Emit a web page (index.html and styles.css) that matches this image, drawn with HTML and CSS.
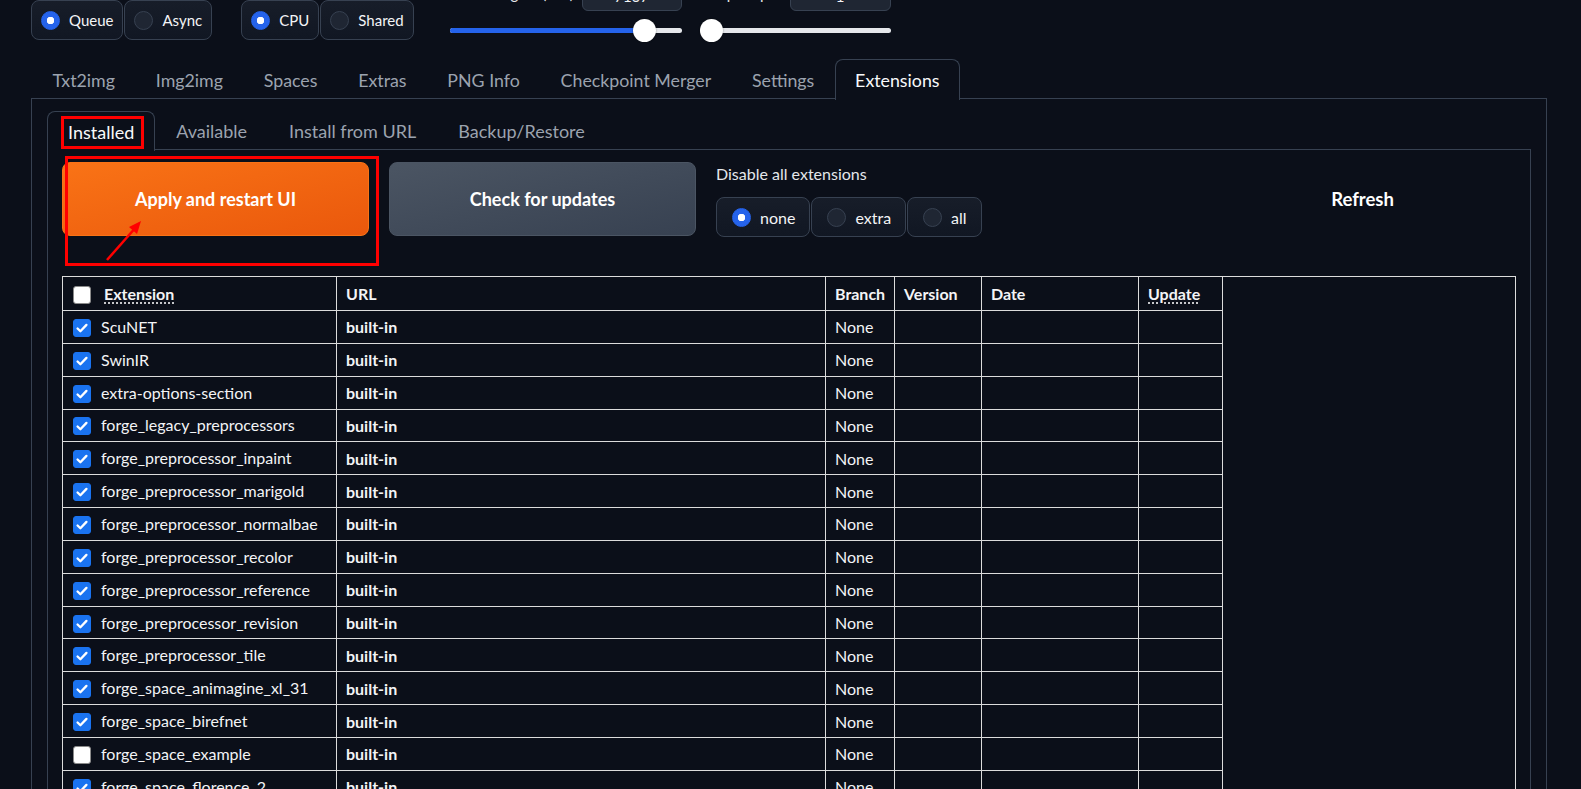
FILE: index.html
```html
<!DOCTYPE html>
<html lang="en">
<head>
<meta charset="utf-8">
<title>Extensions</title>
<link rel="stylesheet" href="styles.css">
</head>
<body>
<div class="app">
  <div class="toprow">
    <div class="rgroup">
      <label class="ropt on"><span class="dot"></span><span>Queue</span></label>
      <label class="ropt"><span class="dot"></span><span>Async</span></label>
    </div>
    <div class="rgroup g2">
      <label class="ropt on"><span class="dot"></span><span>CPU</span></label>
      <label class="ropt"><span class="dot"></span><span>Shared</span></label>
    </div>
    <div class="slider s1">
      <div class="shead"><span class="slbl">GPU Weights (MB)</span><span class="num">7167</span></div>
      <div class="track"><div class="fill" style="width:83.6%"></div><div class="thumb" style="left:83.6%"></div></div>
    </div>
    <div class="slider s2">
      <div class="shead"><span class="slbl">Swap Steps</span><span class="num">1</span></div>
      <div class="track"><div class="fill" style="width:0%"></div><div class="thumb" style="left:0%"></div></div>
    </div>
  </div>

  <div class="tabs">
    <button class="tab">Txt2img</button>
    <button class="tab">Img2img</button>
    <button class="tab">Spaces</button>
    <button class="tab">Extras</button>
    <button class="tab">PNG Info</button>
    <button class="tab">Checkpoint Merger</button>
    <button class="tab">Settings</button>
    <button class="tab active">Extensions</button>
  </div>

  <div class="panel">
    <div class="subtabs">
      <button class="tab active">Installed</button>
      <button class="tab">Available</button>
      <button class="tab">Install from URL</button>
      <button class="tab">Backup/Restore</button>
    </div>
    <div class="subpanel">
      <div class="actions">
        <button class="btn primary">Apply and restart UI</button>
        <button class="btn secondary">Check for updates</button>
        <div class="disable">
          <div class="dlabel">Disable all extensions</div>
          <div class="rgroup dgroup">
            <label class="ropt on"><span class="dot"></span><span>none</span></label>
            <label class="ropt"><span class="dot"></span><span>extra</span></label>
            <label class="ropt"><span class="dot"></span><span>all</span></label>
          </div>
        </div>
        <button class="btn plain">Refresh</button>
      </div>

      <div class="tablewrap">
        <table class="ext">
          <colgroup>
            <col class="c1"><col class="c2"><col class="c3"><col class="c4"><col class="c5"><col class="c6">
          </colgroup>
          <thead>
            <tr>
              <th><span class="cb"></span><abbr class="ul">Extension</abbr></th>
              <th>URL</th>
              <th>Branch</th>
              <th>Version</th>
              <th>Date</th>
              <th><abbr class="ul">Update</abbr></th>
            </tr>
          </thead>
          <tbody>
            <tr><td><span class="cb on"></span>ScuNET</td><td class="url">built-in</td><td>None</td><td></td><td></td><td></td></tr>
            <tr><td><span class="cb on"></span>SwinIR</td><td class="url">built-in</td><td>None</td><td></td><td></td><td></td></tr>
            <tr><td><span class="cb on"></span>extra-options-section</td><td class="url">built-in</td><td>None</td><td></td><td></td><td></td></tr>
            <tr><td><span class="cb on"></span>forge_legacy_preprocessors</td><td class="url">built-in</td><td>None</td><td></td><td></td><td></td></tr>
            <tr><td><span class="cb on"></span>forge_preprocessor_inpaint</td><td class="url">built-in</td><td>None</td><td></td><td></td><td></td></tr>
            <tr><td><span class="cb on"></span>forge_preprocessor_marigold</td><td class="url">built-in</td><td>None</td><td></td><td></td><td></td></tr>
            <tr><td><span class="cb on"></span>forge_preprocessor_normalbae</td><td class="url">built-in</td><td>None</td><td></td><td></td><td></td></tr>
            <tr><td><span class="cb on"></span>forge_preprocessor_recolor</td><td class="url">built-in</td><td>None</td><td></td><td></td><td></td></tr>
            <tr><td><span class="cb on"></span>forge_preprocessor_reference</td><td class="url">built-in</td><td>None</td><td></td><td></td><td></td></tr>
            <tr><td><span class="cb on"></span>forge_preprocessor_revision</td><td class="url">built-in</td><td>None</td><td></td><td></td><td></td></tr>
            <tr><td><span class="cb on"></span>forge_preprocessor_tile</td><td class="url">built-in</td><td>None</td><td></td><td></td><td></td></tr>
            <tr><td><span class="cb on"></span>forge_space_animagine_xl_31</td><td class="url">built-in</td><td>None</td><td></td><td></td><td></td></tr>
            <tr><td><span class="cb on"></span>forge_space_birefnet</td><td class="url">built-in</td><td>None</td><td></td><td></td><td></td></tr>
            <tr><td><span class="cb"></span>forge_space_example</td><td class="url">built-in</td><td>None</td><td></td><td></td><td></td></tr>
            <tr><td><span class="cb on"></span>forge_space_florence_2</td><td class="url">built-in</td><td>None</td><td></td><td></td><td></td></tr>
            <tr><td><span class="cb on"></span>forge_space_geowizard</td><td class="url">built-in</td><td>None</td><td></td><td></td><td></td></tr>
          </tbody>
        </table>
      </div>

      <div class="mark mark-btn"></div>
      <svg class="arrow" width="60" height="60" viewBox="0 0 60 60">
        <line x1="7" y1="46" x2="37" y2="12" stroke="#ff0000" stroke-width="2.5"/>
        <polygon points="41,7 29,13 37,20" fill="#ff0000"/>
      </svg>
    </div>
    <div class="mark mark-tab"></div>
  </div>
</div>
</body>
</html>
```

FILE: styles.css
```css
* { box-sizing: border-box; }
html, body { margin: 0; padding: 0; background: #0b0f19; }
body {
  font-family: Lato, "Noto Sans", sans-serif;
  color: #f3f4f6;
  overflow: hidden;
}
button { font-family: inherit; }

.app { padding: 0 34px 0 31px; }

/* top row */
.toprow { display: flex; align-items: flex-start; height: 40px; }
.rgroup { display: flex; gap: 1px; }
.rgroup.g2 { margin-left: 29px; }
.ropt {
  display: flex; align-items: center; gap: 9px;
  height: 40px; padding: 0 9px 0 9px;
  border: 1px solid #374151; border-radius: 8px;
  background: linear-gradient(to top, #111723, #171d29);
  font-size: 15px; color: #f3f4f6;
}
.dot {
  width: 19px; height: 19px; border-radius: 50%;
  background: #1f2633; border: 1px solid #374151;
  display: inline-block; flex: none;
}
.ropt.on .dot {
  border-color: #2563eb;
  background: radial-gradient(circle, #fff 0 3.5px, #2563eb 4px);
}

.slider { margin-top: -19px; }
.slider.s1 { margin-left: 36px; width: 232px; }
.slider.s2 { margin-left: 18px; width: 191px; }
.shead { display: flex; justify-content: space-between; align-items: flex-start; height: 30px; }
.slbl { font-size: 15px; line-height: 24px; color: #e5e7eb; }
.num {
  width: 100px; height: 30px; border: 1px solid #374151; border-radius: 6px;
  background: #1f2633; text-align: center; line-height: 28px; font-size: 15px;
}
.s2 .num { width: 101px; }
.track {
  position: relative; height: 5px; margin: 17px 0 0 0;
  background: #e5e7eb; border-radius: 3px;
}
.fill { height: 5px; background: #2563eb; border-radius: 3px; }
.thumb {
  position: absolute; top: -9px; width: 23px; height: 23px; margin-left: -11px;
  background: #fff; border-radius: 50%; box-shadow: 0 0 2px rgba(0,0,0,.4);
}
.s2 .thumb { margin-left: 0; }

/* tabs */
.tabs { display: flex; margin-top: 19px; padding-left: 1px; height: 40px; position: relative; z-index: 1; }
.tab {
  background: none; border: 1px solid transparent; border-bottom: none;
  color: #9ca3af; font-size: 17.8px; padding: 0 19.4px; height: 40px;
  border-radius: 8px 8px 0 0; cursor: pointer;
}
.tab.active {
  color: #f9fafb; border-color: #374151; background: #0b0f19;
  height: 41px;
}

.panel {
  position: relative;
  border: 1px solid #374151; margin-top: -1px;
  padding: 12px 15px 0 15px;
  height: 720px;
}
.subtabs { display: flex; height: 39px; position: relative; z-index: 1; }
.subtabs .tab { height: 39px; font-size: 18px; padding: 0 20px; }
.subtabs .tab.active { height: 40px; }
.subpanel {
  position: relative;
  border: 1px solid #374151; margin-top: -1px;
  padding: 12px 14px 0 14px;
  height: 700px;
}

.actions {
  display: grid; grid-template-columns: 307px 307px 1fr 307px; gap: 20px;
  align-items: start;
}
.btn {
  height: 74px; border-radius: 8px; border: 1px solid transparent;
  font-weight: 700; font-size: 18px; color: #fff;
}
.btn.primary { background: linear-gradient(to bottom right, #f97316, #ea580c); border-color: #f97316; }
.btn.secondary { background: linear-gradient(to bottom right, #4b5563, #374151); border-color: #4b5563; }
.btn.plain { background: transparent; font-size: 18.5px; }
.dlabel { font-size: 16px; color: #e5e7eb; height: 24px; line-height: 24px; margin-bottom: 11px; }
.dgroup .ropt { height: 40px; padding: 0 14px 0 15px; gap: 9px; font-size: 16px; }

.tablewrap {
  margin-top: 39px; border: 1px solid #dcdcdc; height: 600px;
}
table.ext {
  border-collapse: collapse; table-layout: fixed; width: 1159px;
  margin: -1px 0 0 -1px;
}
.c1 { width: 274px; } .c2 { width: 489px; } .c3 { width: 69px; }
.c4 { width: 87px; } .c5 { width: 157px; } .c6 { width: 84px; }
table.ext th, table.ext td {
  border: 1px solid #dcdcdc; text-align: left; padding: 0 9px;
  font-size: 16px; white-space: nowrap; overflow: hidden;
}
table.ext th { height: 34px; font-weight: 700; }
table.ext td { height: 32.85px; }
table.ext td.url { font-weight: 700; }
.ul { text-decoration: underline dotted; text-underline-offset: 3px; }
.cb {
  display: inline-block; width: 18px; height: 18px; vertical-align: -4px;
  margin: 0 10px 0 1px; border-radius: 3px; background: #fff; border: 1px solid #8a8a8a;
}
th .cb { margin-right: 13px; }
.cb.on {
  background: #1a73f0; border-color: #1a73f0;
  background-image: url("data:image/svg+xml;utf8,<svg xmlns='http://www.w3.org/2000/svg' viewBox='0 0 18 18'><path d='M4 9.5l3.2 3.2L14 5.5' fill='none' stroke='white' stroke-width='2.6' stroke-linecap='round' stroke-linejoin='round'/></svg>");
}

/* annotations */
.mark { position: absolute; border: 3px solid #ff0000; z-index: 3; }
.mark-tab { left: 29px; top: 17px; width: 83px; height: 33px; }
.mark-btn { left: 17px; top: 6px; width: 314px; height: 110px; }
.arrow { position: absolute; left: 52px; top: 64px; z-index: 3; }
```
